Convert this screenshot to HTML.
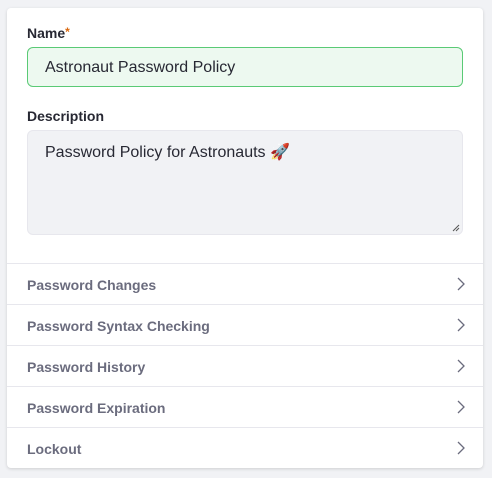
<!DOCTYPE html><html><head><style>
body{margin:0;background:#f1f2f5;width:492px;height:478px;font-family:"Liberation Sans",sans-serif;overflow:hidden}
.card{position:absolute;left:7px;top:8px;width:476px;height:460px;background:#fff;border-radius:4px;box-shadow:0 1px 3px rgba(0,0,0,.15)}
.lab{position:absolute;left:20px;font-weight:bold;font-size:14px;color:#272833}
.lab span{color:#da6a12;font-size:12px;vertical-align:top}
.in{position:absolute;left:20px;width:436px;box-sizing:border-box;border-radius:6px;font-size:16px;color:#272833;padding-left:17px}
.row{position:absolute;left:0;width:476px;height:41px;border-top:1px solid #e7e7ed;box-sizing:border-box}
.row b{position:absolute;left:20px;top:13px;font-size:14px;color:#6b6c7e}
.row svg{position:absolute;left:449px;top:13px}
</style></head><body><div class="card">
<div class="lab" style="top:17px">Name<span>*</span></div>
<div class="in" style="top:39px;height:40px;background:#edf9f0;border:1px solid #5aca75;line-height:40px">Astronaut Password Policy</div>
<div class="lab" style="top:100px">Description</div>
<div class="in" style="top:122px;height:105px;background:#f1f2f5;border:1px solid #e7e7ed;padding-top:11px">Password Policy for Astronauts 🚀
<svg style="position:absolute;right:2px;bottom:2px" width="8" height="8"><path d="M1 7L7 1M4 7L7 4" stroke="#555" stroke-width="1"/></svg></div>
<div class="row" style="top:255px"><b>Password Changes</b><svg width="10" height="14"><path d="M2 1L8 7L2 13" fill="none" stroke="#6b6c7e" stroke-width="1.3"/></svg></div>
<div class="row" style="top:296px"><b>Password Syntax Checking</b><svg width="10" height="14"><path d="M2 1L8 7L2 13" fill="none" stroke="#6b6c7e" stroke-width="1.3"/></svg></div>
<div class="row" style="top:337px"><b>Password History</b><svg width="10" height="14"><path d="M2 1L8 7L2 13" fill="none" stroke="#6b6c7e" stroke-width="1.3"/></svg></div>
<div class="row" style="top:378px"><b>Password Expiration</b><svg width="10" height="14"><path d="M2 1L8 7L2 13" fill="none" stroke="#6b6c7e" stroke-width="1.3"/></svg></div>
<div class="row" style="top:419px"><b>Lockout</b><svg width="10" height="14"><path d="M2 1L8 7L2 13" fill="none" stroke="#6b6c7e" stroke-width="1.3"/></svg></div>
</div></body></html>
